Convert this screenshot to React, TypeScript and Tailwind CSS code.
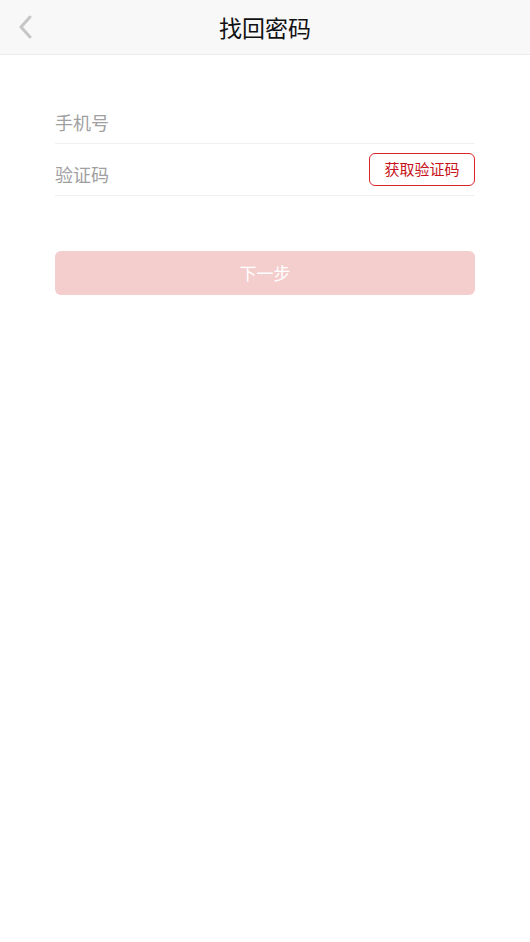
import React, { useState } from 'react';

const font = { fontFamily: '"Noto Sans CJK SC", "Noto Sans", sans-serif' };

const App: React.FC = () => {
  const [phone, setPhone] = useState('');
  const [code, setCode] = useState('');

  return (
    <div className="min-h-[942px] w-full bg-white" style={font}>
      {/* Header */}
      <div className="relative flex h-[55px] items-center justify-center border-b border-[#ececec] bg-[#f8f8f8]">
        <button className="absolute left-[15px] top-[14px] flex h-[26px] w-[20px] items-center justify-center">
          <svg width="16" height="24" viewBox="0 0 16 24" fill="none">
            <path d="M13 2 L4 12 L13 22" stroke="#c6c6c6" strokeWidth="3" strokeLinecap="round" strokeLinejoin="round" />
          </svg>
        </button>
        <h1 className="text-[23px] leading-none text-[#111]">找回密码</h1>
      </div>

      {/* Form */}
      <div className="px-[55px] pt-[36px]">
        <div className="flex h-[53px] items-end border-b border-[#f1f1f1] pb-[9px]">
          <input
            value={phone}
            onChange={(e) => setPhone(e.target.value)}
            placeholder="手机号"
            className="w-full bg-transparent text-[18px] leading-[24px] text-[#333] outline-none placeholder:text-[#a0a0a0]"
          />
        </div>
        <div className="relative flex h-[52px] items-end border-b border-[#f1f1f1] pb-[9px]">
          <input
            value={code}
            onChange={(e) => setCode(e.target.value)}
            placeholder="验证码"
            className="flex-1 bg-transparent text-[18px] leading-[24px] text-[#333] outline-none placeholder:text-[#a0a0a0]"
          />
          <button className="absolute right-0 top-[9px] flex h-[33px] w-[106px] items-center justify-center rounded-[6px] border border-[#d9242b] text-[15px] text-[#c8121a]">
            获取验证码
          </button>
        </div>

        <button
          disabled={!phone || !code}
          className="mt-[55px] flex h-[44px] w-full items-center justify-center rounded-[6px] bg-[#f4cdcd] text-[17px] text-white"
        >
          下一步
        </button>
      </div>
    </div>
  );
};

export default App;
